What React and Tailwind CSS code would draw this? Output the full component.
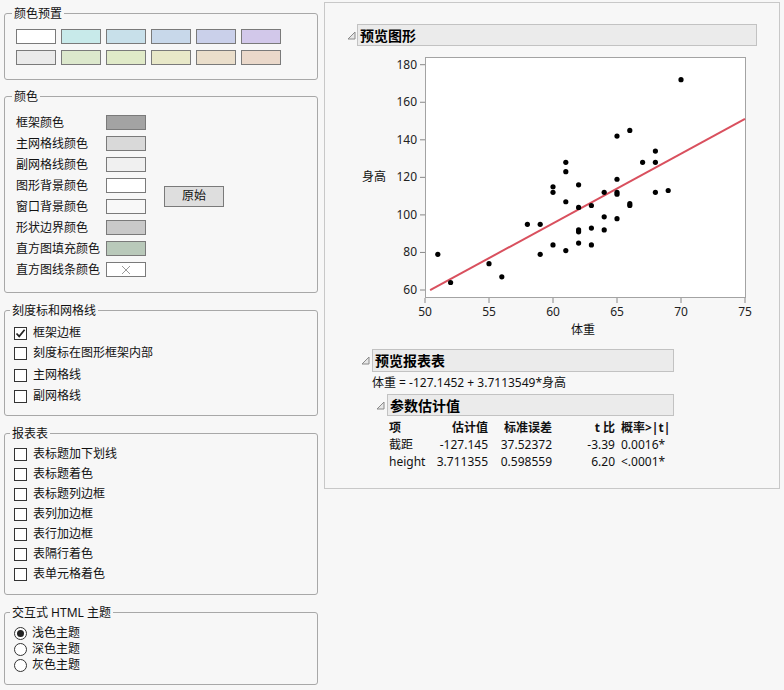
import React from 'react';

const FONT = "font-['Noto_Sans','Noto_Sans_CJK_SC',sans-serif]";

const presetRows = [
  ['#ffffff', '#c8eaea', '#c8e0ea', '#c8d8ea', '#cad0ea', '#d2c8ea'],
  ['#eaeaea', '#dce8cc', '#e0eac8', '#e8e8c8', '#eadecb', '#ead8ca'],
];

const colorRows = [
  ['框架颜色', '#a3a3a3'],
  ['主网格线颜色', '#d9d9d9'],
  ['副网格线颜色', '#f0f0f0'],
  ['图形背景颜色', '#ffffff'],
  ['窗口背景颜色', '#f8f8f8'],
  ['形状边界颜色', '#c9c9c9'],
  ['直方图填充颜色', '#b9c9ba'],
  ['直方图线条颜色', 'x'],
];

const tableOpts = ['表标题加下划线', '表标题着色', '表标题列边框', '表列加边框', '表行加边框', '表隔行着色', '表单元格着色'];

const points = [
  [51, 79], [52, 64], [55, 74], [56, 67], [58, 95], [59, 95], [59, 79],
  [60, 115], [60, 112], [60, 84], [61, 128], [61, 123], [61, 107], [61, 81],
  [62, 116], [62, 104], [62, 92], [62, 91], [62, 85], [63, 105], [63, 93], [63, 84],
  [64, 112], [64, 99], [64, 92], [65, 142], [65, 119], [65, 112], [65, 111], [65, 98],
  [66, 145], [66, 106], [66, 105], [67, 128], [68, 134], [68, 128], [68, 112], [69, 113], [70, 172],
];

function Group({ title, className, children }) {
  return (
    <fieldset className={`border border-[#a8a8a8] rounded-[3px] ${className}`}>
      <legend className="ml-[-4px] px-[2px] text-[12px] leading-[15px] text-[#111]">{title}</legend>
      {children}
    </fieldset>
  );
}

function Check({ checked, label, className = '' }) {
  return (
    <div className={`flex items-center h-[20px] ${className}`}>
      <span className="w-[13px] h-[13px] border border-[#333] bg-white flex items-center justify-center">
        {checked && (
          <svg width="11" height="11" viewBox="0 0 11 11">
            <path d="M1.5 5.5 L4.2 8.4 L9.6 1.8" fill="none" stroke="#222" strokeWidth="1.7" />
          </svg>
        )}
      </span>
      <span className="ml-[6px] text-[12px] leading-[16px] text-[#111]">{label}</span>
    </div>
  );
}

function Radio({ checked, label }) {
  return (
    <div className="flex items-center h-[16px]">
      <span className="w-[13px] h-[13px] rounded-full border border-[#333] bg-white flex items-center justify-center">
        {checked && <span className="w-[7px] h-[7px] rounded-full bg-[#222]" />}
      </span>
      <span className="ml-[5px] text-[12px] leading-[16px] text-[#111]">{label}</span>
    </div>
  );
}

function Triangle() {
  return (
    <svg width="9" height="9" viewBox="0 0 9 9" className="shrink-0">
      <path d="M8 1 L8 8 L1 8 Z" fill="#e6e6e6" stroke="#8a8a8a" strokeWidth="1" />
    </svg>
  );
}

function OutlineHeader({ title, boxW, boxH, gap = 2 }) {
  return (
    <div className="flex items-center">
      <Triangle />
      <div
        className="border border-[#c2c2c2] bg-[#ebebeb] flex items-center pl-[2px] text-[14px] font-bold text-black"
        style={{ width: boxW, height: boxH, marginLeft: gap }}
      >
        {title}
      </div>
    </div>
  );
}

const sx = (v) => 68 + (v - 50) * 12.8;
const sy = (v) => 244 - (v - 60) * 1.8775;

function Chart() {
  return (
    <svg width="400" height="300" className="block ml-[10px]" fontFamily="'Noto Sans','Noto Sans CJK SC',sans-serif">
      <rect x="68.5" y="11.5" width="320" height="240" fill="#ffffff" stroke="#a3a3a3" />
      {[60, 80, 100, 120, 140, 160, 180].map((v) => (
        <g key={v}>
          <line x1="63" x2="68" y1={sy(v)} y2={sy(v)} stroke="#888" />
          <text x="60" y={sy(v) + 4} textAnchor="end" fontSize="12" fill="#222">{v}</text>
        </g>
      ))}
      {[50, 55, 60, 65, 70, 75].map((v) => (
        <g key={v}>
          <line x1={sx(v)} x2={sx(v)} y1="252" y2="257" stroke="#888" />
          <text x={sx(v)} y="270" textAnchor="middle" fontSize="12" fill="#222">{v}</text>
        </g>
      ))}
      <line
        x1={sx(50.4)}
        y1={sy(-127.1452 + 3.7113549 * 50.4)}
        x2={sx(75)}
        y2={sy(-127.1452 + 3.7113549 * 75)}
        stroke="#d9505e"
        strokeWidth="2"
      />
      {points.map(([x, y], i) => (
        <circle key={i} cx={sx(x)} cy={sy(y)} r="2.6" fill="#000" />
      ))}
      <text x="226" y="288" textAnchor="middle" fontSize="12" fill="#111">体重</text>
      <text x="17" y="135" textAnchor="middle" fontSize="12" fill="#111">身高</text>
    </svg>
  );
}

export default function App() {
  return (
    <div className={`w-[784px] h-[690px] bg-[#f7f7f7] flex ${FONT} overflow-hidden`}>
      {/* left options column */}
      <div className="ml-[4px] w-[314px] flex flex-col pt-[6px]">
        <Group title="颜色预置" className="pl-[11px] pt-[8px] pb-[14px]">
          <div className="grid grid-cols-[repeat(6,40px)] gap-x-[5px] gap-y-[6px]">
            {presetRows.flat().map((c, i) => (
              <div key={i} className="h-[15px] border border-[#7a7a7a]" style={{ background: c }} />
            ))}
          </div>
        </Group>

        <Group title="颜色" className="mt-[9px] pl-[11px] pt-[11px] pb-[15px]">
          <div className="flex">
            <div className="flex flex-col gap-[6px]">
              {colorRows.map(([label, c]) => (
                <div key={label} className="flex items-center h-[15px]">
                  <span className="w-[90px] text-[12px] leading-[16px] text-[#111]">{label}</span>
                  {c === 'x' ? (
                    <div className="w-[40px] h-[15px] border border-[#7a7a7a] bg-white flex items-center justify-center">
                      <svg width="10" height="10" viewBox="0 0 10 10">
                        <path d="M1 1 L9 9 M9 1 L1 9" stroke="#9a9a9a" strokeWidth="1" />
                      </svg>
                    </div>
                  ) : (
                    <div className="w-[40px] h-[15px] border border-[#7a7a7a]" style={{ background: c }} />
                  )}
                </div>
              ))}
            </div>
            <div className="self-center ml-[18px] w-[60px] h-[21px] border border-[#7a7a7a] bg-[#dedede] flex items-center justify-center text-[12px] text-[#111]">
              原始
            </div>
          </div>
        </Group>

        <Group title="刻度标和网格线" className="mt-[10px] pl-[9px] pt-[5px] pb-[9px]">
          <Check checked label="框架边框" />
          <Check label="刻度标在图形框架内部" />
          <Check label="主网格线" className="mt-[2px]" />
          <Check label="副网格线" className="mt-[1px]" />
        </Group>

        <Group title="报表表" className="mt-[10px] pl-[9px] pt-[3px] pb-[10px]">
          {tableOpts.map((t) => (
            <Check key={t} label={t} />
          ))}
        </Group>

        <Group title="交互式 HTML 主题" className="mt-[10px] pl-[9px] pt-[5px] pb-[11px]">
          <Radio checked label="浅色主题" />
          <Radio label="深色主题" />
          <Radio label="灰色主题" />
        </Group>
      </div>

      {/* right preview panel */}
      <div className="ml-[6px] mt-[2px] w-[456px] h-[487px] border border-[#c8c8c8] pt-[21px] pl-[22px]">
        <OutlineHeader title="预览图形" boxW={400} boxH={22} gap={1} />
        <Chart />
        <div className="ml-[14px] mt-[3px]">
          <OutlineHeader title="预览报表表" boxW={302} boxH={23} />
          <div className="ml-[11px] mt-[3px] text-[12px] leading-[16px] text-[#111]">
            体重 = -127.1452 + 3.7113549*身高
          </div>
          <div className="ml-[15px] mt-[3px]">
            <OutlineHeader title="参数估计值" boxW={287} boxH={22} />
            <div className="ml-[13px] mt-[4px] grid grid-cols-[41px_58px_64px_63px_auto] text-[12px] text-[#111]">
              <div className="font-bold leading-[16px]">项</div>
              <div className="font-bold leading-[16px] text-right">估计值</div>
              <div className="font-bold leading-[16px] text-right">标准误差</div>
              <div className="font-bold leading-[16px] text-right">t 比</div>
              <div className="font-bold leading-[16px] pl-[6px]">概率&gt;|t|</div>

              <div className="leading-[17px]">截距</div>
              <div className="leading-[17px] text-right">-127.145</div>
              <div className="leading-[17px] text-right">37.52372</div>
              <div className="leading-[17px] text-right">-3.39</div>
              <div className="leading-[17px] pl-[6px]">0.0016*</div>

              <div className="leading-[17px]">height</div>
              <div className="leading-[17px] text-right">3.711355</div>
              <div className="leading-[17px] text-right">0.598559</div>
              <div className="leading-[17px] text-right">6.20</div>
              <div className="leading-[17px] pl-[6px]">&lt;.0001*</div>
            </div>
          </div>
        </div>
      </div>
    </div>
  );
}
